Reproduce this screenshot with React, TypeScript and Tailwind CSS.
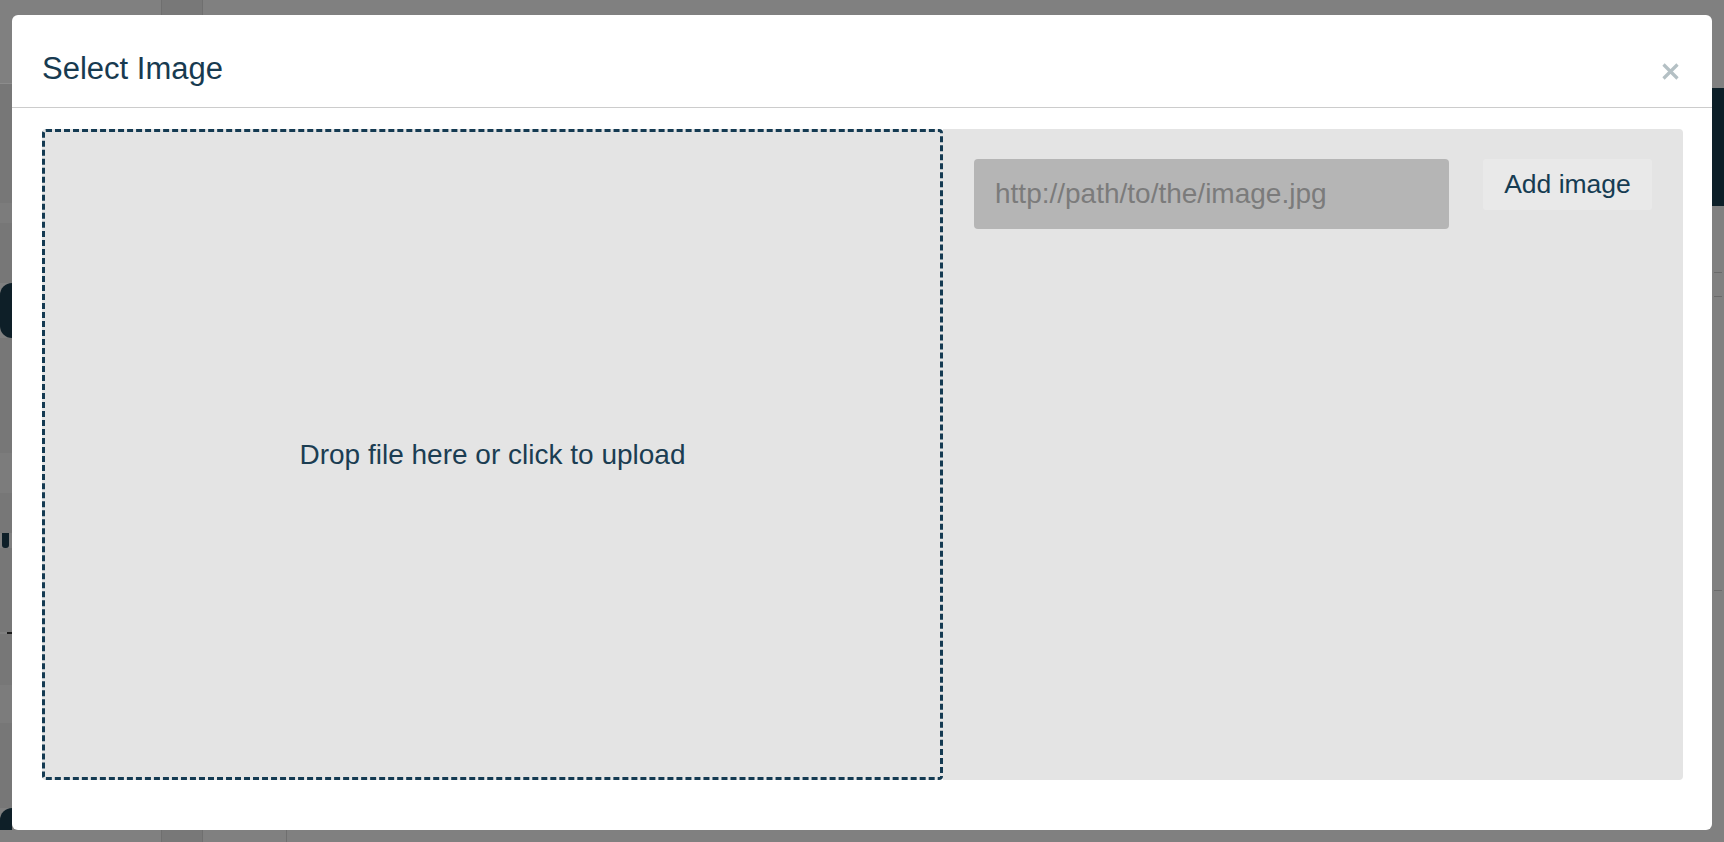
const font = { fontFamily: '"Liberation Sans", Arial, sans-serif' };

// dimmed page strip showing at the left edge behind the overlay
const LeftStrip = () => (
  <div aria-hidden className="flex w-[12px] shrink-0 flex-col">
    <div className="h-[68px] bg-[#808080]" />
    <div className="h-px bg-[#8c8c8c]" />
    <div className="h-[119px] bg-[#777777]" />
    <div className="h-[20px] bg-[#7c7c7c]" />
    <div className="h-[60px] bg-[#777777]" />
    <div className="h-[55px] rounded-l-[20px] bg-[#0e1f28]" />
    <div className="h-[115px] bg-[#777777]" />
    <div className="h-[40px] bg-[#7c7c7c]" />
    <div className="h-[40px] bg-[#777777]" />
    <div className="ml-[2px] h-[15px] w-[7px] rounded-b-[3px] bg-[#0e1f28]" />
    <div className="h-[84px] bg-[#777777]" />
    <div className="ml-[7px] h-[2px] w-[5px] bg-[#1b1b1b]" />
    <div className="h-[51px] bg-[#777777]" />
    <div className="h-[38px] bg-[#7c7c7c]" />
    <div className="h-[85px] bg-[#777777]" />
    <div className="flex-1 rounded-tl-[14px] bg-[#0e1f28]" />
  </div>
);

const RightStrip = () => (
  <div aria-hidden className="flex w-[12px] shrink-0 flex-col">
    <div className="h-[73px]" />
    <div className="h-[118px] bg-[#0c1f28]" />
    <div className="h-[66px]" />
    <div className="mx-[2px] h-px bg-[#6a6a6a]" />
    <div className="h-[23px]" />
    <div className="mx-[2px] h-px bg-[#6a6a6a]" />
    <div className="h-[293px]" />
    <div className="mx-[2px] h-px bg-[#6a6a6a]" />
  </div>
);

const EdgeBar = ({ h, third }: { h: string; third?: boolean }) => (
  <div aria-hidden className={`flex ${h} shrink-0`}>
    <div className="w-[161px]" />
    <div className="w-[42px] border-x border-[#6f6f6f] bg-[#787878]" />
    {third && <div className="ml-[83px] w-px bg-[#6f6f6f]" />}
  </div>
);

export default function App() {
  return (
    <div className="flex h-[842px] w-full flex-col overflow-hidden bg-[#808080]" style={font}>
      <EdgeBar h="h-[15px]" />

      <div className="flex h-[815px]">
        <LeftStrip />

        <div className="flex w-[1700px] flex-col rounded-[6px] bg-white">
          {/* Header */}
          <div className="flex h-[93px] items-start justify-between border-b border-[#cccccc] pl-[30px] pr-[33px] pt-[38px]">
            <h1 className="text-[31px] font-normal leading-none text-[#173a50]">Select Image</h1>
            <button className="mt-[10px] text-[#b4c0c4]" aria-label="Close">
              <svg width="17" height="17" viewBox="0 0 17 17" fill="none" stroke="currentColor" strokeWidth="3.2">
                <path d="M1.5 1.5 15.5 15.5M15.5 1.5 1.5 15.5" />
              </svg>
            </button>
          </div>

          {/* Body */}
          <div className="mt-[21px] flex h-[651px] pl-[30px] pr-[29px]">
            <div className="flex w-[901px] items-center justify-center rounded-[4px] border-[3px] border-dashed border-[#143a52] bg-[#e4e4e4]">
              <span className="text-[28px] leading-none text-[#1b3d52]">Drop file here or click to upload</span>
            </div>

            <div className="flex flex-1 items-start gap-[34px] rounded-r-[4px] bg-[#e4e4e4] pl-[31px] pt-[30px]">
              <input
                type="text"
                placeholder="http://path/to/the/image.jpg"
                className="h-[70px] w-[475px] rounded-[4px] bg-[#b5b5b5] pl-[21px] text-[28px] text-[#333] outline-none placeholder:text-[#7b7b7b]"
              />
              <button className="h-[51px] w-[169px] rounded-[3px] bg-[#e9e9e9] text-[26.5px] leading-none text-[#163c52]">
                Add image
              </button>
            </div>
          </div>
        </div>

        <RightStrip />
      </div>

      <EdgeBar h="h-[12px]" third />
    </div>
  );
}
